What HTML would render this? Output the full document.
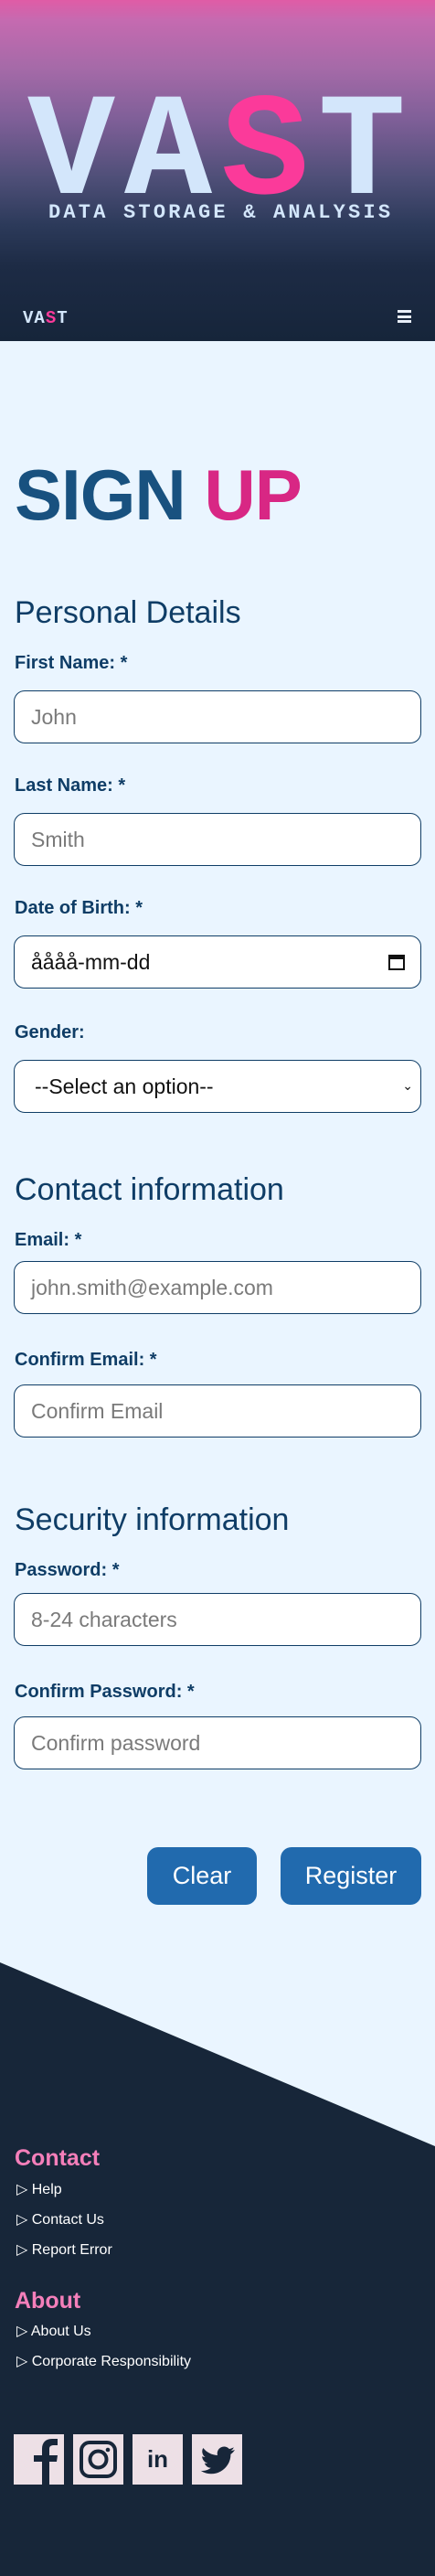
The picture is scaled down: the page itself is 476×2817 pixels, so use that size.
<!DOCTYPE html>
<html><head><meta charset="utf-8"><style>
*{margin:0;padding:0;box-sizing:border-box}
body{width:476px;height:2817px;background:#eaf5ff;font-family:"Liberation Sans",sans-serif;position:relative;overflow:hidden}
.a{position:absolute}
header{position:absolute;left:0;top:0;width:476px;height:373px;background:linear-gradient(180deg,#e05ca6 0%,#c56ab0 6%,#a56aa8 20%,#7f5f98 35%,#4f4f78 52%,#2c3a5a 66%,#1d2b45 78%,#16253a 100%)}
.big{font-family:"Liberation Mono",monospace;font-weight:bold;color:#d3e6fb;font-size:160px;line-height:1;letter-spacing:10px;left:30px;top:90px}
.sub{font-family:"Liberation Mono",monospace;font-weight:bold;color:#d3e6fb;font-size:22px;letter-spacing:3.2px;left:53px;top:220px}
.pk{color:#fb3a9a}
.h2{color:#0f3d66;font-size:34px;left:16px}
.lb{color:#0f3d66;font-size:20px;font-weight:bold;left:16px}
.in{left:15px;width:446px;height:58px;border:1.5px solid #0f3d66;border-radius:12px;background:#fff;font-size:23px;color:#7a7a7a;padding:16px 18px;line-height:24px}
.btn{top:2020px;height:63px;background:#216aae;border-radius:12px;color:#fff;font-size:27px;text-align:center;line-height:63px}
.fh{color:#f47fba;font-size:25px;font-weight:bold;left:16px}
.fl{color:#fff;font-size:16px;left:18px}
.so{top:2662px;width:55px;height:55px;background:#ede0e6}
</style></head><body>
<header>
<div class="a big">VA<span class="pk">S</span>T</div>
<div class="a sub">DATA STORAGE &amp; ANALYSIS</div>
<div class="a" style="left:25px;top:337px;font-family:'Liberation Mono',monospace;font-weight:bold;color:#d3e6fb;font-size:19px;letter-spacing:1px">VA<span class="pk">S</span>T</div>
<div class="a" style="left:435px;top:339px;width:15px;height:14px;border-top:3px solid #e8eef8;border-bottom:3px solid #e8eef8"><div style="margin-top:2.5px;height:3px;background:#e8eef8"></div></div>
</header>
<div class="a" style="left:16px;top:496px;font-size:78px;font-weight:bold;color:#18517f;letter-spacing:-1px">SIGN <span style="color:#d82784">UP</span></div>

<div class="a h2" style="top:651px">Personal Details</div>
<div class="a lb" style="top:714px">First Name: *</div>
<div class="a in" style="top:755px">John</div>
<div class="a lb" style="top:848px">Last Name: *</div>
<div class="a in" style="top:889px">Smith</div>
<div class="a lb" style="top:982px">Date of Birth: *</div>
<div class="a in" style="top:1023px;color:#111">åååå-mm-dd
<svg style="position:absolute;right:16px;top:18px" width="20" height="20" viewBox="0 0 20 20"><rect x="2" y="3" width="16" height="15" fill="none" stroke="#111" stroke-width="2"/><rect x="2" y="3" width="16" height="4" fill="#111"/></svg></div>
<div class="a lb" style="top:1118px">Gender:</div>
<div class="a in" style="top:1159px;color:#111;padding-left:22px">--Select an option--<span style="position:absolute;right:8px;top:15px;font-size:14px">&#8964;</span></div>

<div class="a h2" style="top:1282px">Contact information</div>
<div class="a lb" style="top:1345px">Email: *</div>
<div class="a in" style="top:1379px">john.smith@example.com</div>
<div class="a lb" style="top:1476px">Confirm Email: *</div>
<div class="a in" style="top:1514px">Confirm Email</div>

<div class="a h2" style="top:1643px">Security information</div>
<div class="a lb" style="top:1706px">Password: *</div>
<div class="a in" style="top:1742px">8-24 characters</div>
<div class="a lb" style="top:1839px">Confirm Password: *</div>
<div class="a in" style="top:1877px">Confirm password</div>

<div class="a btn" style="left:161px;width:120px">Clear</div>
<div class="a btn" style="left:307px;width:154px">Register</div>

<svg class="a" style="left:0;top:2140px" width="476" height="677" viewBox="0 0 476 677"><polygon points="0,6 476,207 476,677 0,677" fill="#172639"/></svg>

<div class="a fh" style="top:2346px">Contact</div>
<div class="a fl" style="top:2384px">▷ Help</div>
<div class="a fl" style="top:2417px">▷ Contact Us</div>
<div class="a fl" style="top:2450px">▷ Report Error</div>
<div class="a fh" style="top:2502px">About</div>
<div class="a fl" style="top:2539px">▷ About Us</div>
<div class="a fl" style="top:2572px">▷ Corporate Responsibility</div>

<div class="a so" style="left:15px"><svg width="55" height="55" viewBox="0 0 55 55"><path d="M31 55V30h-9v-7h9v-7c0-7 4-11 11-11h6v7h-4c-3 0-5 1-5 4v7h9l-1 7h-8v25z" fill="#172639"/></svg></div>
<div class="a so" style="left:80px"><svg width="55" height="55" viewBox="0 0 55 55"><rect x="9" y="9" width="37" height="37" rx="9" fill="none" stroke="#172639" stroke-width="4"/><circle cx="27.5" cy="27.5" r="9" fill="none" stroke="#172639" stroke-width="4"/><circle cx="38" cy="17" r="2.3" fill="#172639"/></svg></div>
<div class="a so" style="left:145px;text-align:center;font-weight:bold;font-size:26px;color:#172639;line-height:55px">in</div>
<div class="a so" style="left:210px"><svg width="55" height="55" viewBox="0 0 55 55"><path d="M47 17c-1.5.6-3 1-4.5 1.2 1.6-1 2.7-2.4 3.3-4-1.5.9-3.2 1.5-4.9 1.9a7.5 7.5 0 0 0-12.9 6.9C21.7 22.7 16 19.7 12.3 15a7.5 7.5 0 0 0 2.3 10 7.4 7.4 0 0 1-3.4-.9c0 3.6 2.6 6.7 6 7.4a7.5 7.5 0 0 1-3.4.1 7.5 7.5 0 0 0 7 5.2A15 15 0 0 1 9.7 39.9 21.2 21.2 0 0 0 42.4 21.9c1.8-1.2 3.3-2.8 4.6-4.9z" fill="#172639"/></svg></div>
</body></html>
